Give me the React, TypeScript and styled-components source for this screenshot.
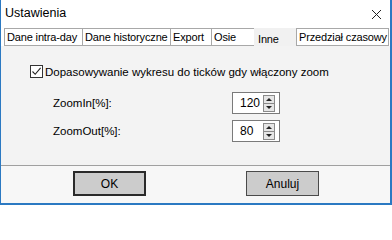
import React from 'react';
import styled, { createGlobalStyle } from 'styled-components';

const GlobalStyle = createGlobalStyle`
  html, body {
    margin: 0;
    padding: 0;
    background: #ffffff;
  }
`;

const tabs = [
  { label: 'Dane intra-day', width: 78 },
  { label: 'Dane historyczne', width: 88 },
  { label: 'Export', width: 41 },
  { label: 'Osie', width: 43 },
  { label: 'Inne', width: 42, active: true },
  { label: 'Przedział czasowy', width: 93 },
];

const Window = styled.div`
  width: 392px;
  height: 205px;
  box-sizing: border-box;
  display: flex;
  flex-direction: column;
  background: #ffffff;
  border-left: 1px solid #2b79c2;
  border-right: 2px solid #2b79c2;
  border-bottom: 2px solid #2b79c2;
  font-family: 'Liberation Sans', Arial, sans-serif;
  color: #000;
`;

const TitleBar = styled.div`
  height: 28px;
  display: flex;
  align-items: center;
  justify-content: space-between;
  padding: 0 8px 0 4px;
  font-size: 12.5px;
  flex-shrink: 0;
`;

const Title = styled.span`
  margin-top: -3px;
`;

const TabStrip = styled.div`
  display: flex;
  height: 18px;
  padding-left: 3px;
  background: #ffffff;
  flex-shrink: 0;
`;

const Tab = styled.div<{ $active?: boolean; $width: number }>`
  box-sizing: border-box;
  width: ${(p) => p.$width}px;
  height: ${(p) => (p.$active ? 19 : 18)}px;
  border: ${(p) => (p.$active ? 'none' : '1px solid #a8a8a8')};
  border-right: ${(p) => (p.$active ? 'none' : '0')};
  background: ${(p) => (p.$active ? '#f1f1f1' : '#ffffff')};
  font-size: 11px;
  letter-spacing: -0.15px;
  line-height: ${(p) => (p.$active ? 22 : 16)}px;
  padding-left: ${(p) => (p.$active ? 4 : 2)}px;
  white-space: nowrap;
  overflow: hidden;

  &:last-child {
    border-right: 1px solid #a8a8a8;
  }
`;

const Panel = styled.div`
  flex: 1;
  background: #f3f3f3;
  padding: 19px 0 0 29px;
  font-size: 11.5px;
`;

const CheckRow = styled.label`
  display: flex;
  align-items: center;
  gap: 2px;
  height: 13px;
`;

const CheckBox = styled.span`
  width: 13px;
  height: 13px;
  box-sizing: border-box;
  border: 1px solid #333333;
  background: #ffffff;
  display: flex;
  align-items: center;
  justify-content: center;
`;

const FieldGrid = styled.div`
  display: grid;
  grid-template-columns: 179px 48px;
  row-gap: 6px;
  margin: 14px 0 0 23px;
  align-items: center;
`;

const SpinBox = styled.div`
  width: 48px;
  height: 22px;
  box-sizing: border-box;
  border: 1px solid #7a7a7a;
  background: #ffffff;
  display: flex;
  align-items: center;
  padding: 0 4px 0 7px;
  font-size: 12px;
`;

const SpinValue = styled.span`
  flex: 1;
`;

const SpinButtons = styled.div`
  display: flex;
  flex-direction: column;
  width: 10px;
  border: 1px solid #8a8a8a;
  background: #e6e6e6;
`;

const SpinButton = styled.div<{ $down?: boolean }>`
  height: 7px;
  display: flex;
  align-items: center;
  justify-content: center;
  border-top: ${(p) => (p.$down ? '1px solid #8a8a8a' : 'none')};

  &::after {
    content: '';
    border-left: 3px solid transparent;
    border-right: 3px solid transparent;
    ${(p) => (p.$down ? 'border-top: 3px solid #222;' : 'border-bottom: 3px solid #222;')}
  }
`;

const Footer = styled.div`
  height: 38px;
  flex-shrink: 0;
  border-top: 1px solid #a0a0a0;
  background: #f7f7f7;
  display: flex;
  padding: 5px 0 0 72px;
  gap: 100px;
  box-sizing: border-box;
`;

const Button = styled.button<{ $default?: boolean }>`
  width: 73px;
  height: 25px;
  box-sizing: border-box;
  background: #cccccc;
  border: ${(p) => (p.$default ? '2px solid #2a2a2a' : '1px solid #4a4a4a')};
  font-family: 'Liberation Sans', Arial, sans-serif;
  font-size: 12px;
  color: #000;
  padding: 0;
`;

const Spinner = ({ value }: { value: string }) => (
  <SpinBox>
    <SpinValue>{value}</SpinValue>
    <SpinButtons>
      <SpinButton />
      <SpinButton $down />
    </SpinButtons>
  </SpinBox>
);

export default function App() {
  return (
    <>
      <GlobalStyle />
      <Window>
        <TitleBar>
          <Title>Ustawienia</Title>
          <svg width='11' height='11' viewBox='0 0 11 11'>
            <path d='M1 1 L10 10 M10 1 L1 10' stroke='#222' strokeWidth='1' />
          </svg>
        </TitleBar>
        <TabStrip>
          {tabs.map((tab) => (
            <Tab key={tab.label} $width={tab.width} $active={tab.active}>
              {tab.label}
            </Tab>
          ))}
        </TabStrip>
        <Panel>
          <CheckRow>
            <CheckBox>
              <svg width='11' height='11' viewBox='0 0 11 11'>
                <path d='M1.5 5.5 L4.2 8.3 L9.6 1.8' fill='none' stroke='#222' strokeWidth='1.1' />
              </svg>
            </CheckBox>
            Dopasowywanie wykresu do ticków gdy włączony zoom
          </CheckRow>
          <FieldGrid>
            <span>ZoomIn[%]:</span>
            <Spinner value='120' />
            <span>ZoomOut[%]:</span>
            <Spinner value='80' />
          </FieldGrid>
        </Panel>
        <Footer>
          <Button $default>OK</Button>
          <Button>Anuluj</Button>
        </Footer>
      </Window>
    </>
  );
}
